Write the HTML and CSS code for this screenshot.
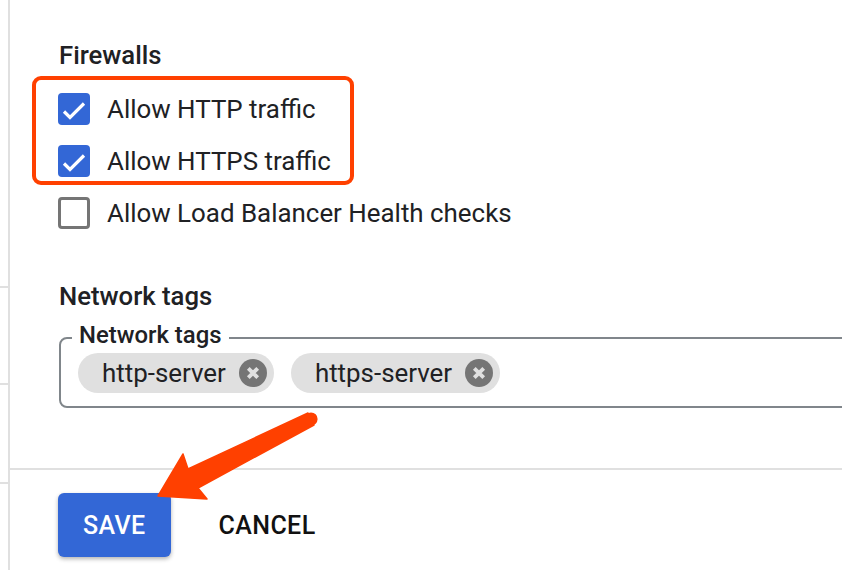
FILE: index.html
```html
<!DOCTYPE html>
<html lang="en">
<head>
    <meta charset="UTF-8">
    <meta name="viewport" content="width=device-width, initial-scale=1.0">
    <title>Firewall settings</title>
    <link rel="stylesheet" href="styles.css">
</head>
<body>
    <div class="page">
        <div class="rail">
            <div class="rail-row r1"></div>
            <div class="rail-row r2"></div>
            <div class="rail-row r3"></div>
        </div>

        <div class="panel">
            <div class="section">
                <h3 class="section-title">Firewalls</h3>

                <label class="check">
                    <span class="box checked">
                        <svg viewBox="0 0 32 32" width="32" height="32"><path d="M6 18.5 L12 24.5 L26 10.5" fill="none" stroke="#fff" stroke-width="3.2"/></svg>
                    </span>
                    Allow HTTP traffic
                </label>
                <label class="check">
                    <span class="box checked">
                        <svg viewBox="0 0 32 32" width="32" height="32"><path d="M6 18.5 L12 24.5 L26 10.5" fill="none" stroke="#fff" stroke-width="3.2"/></svg>
                    </span>
                    Allow HTTPS traffic
                </label>
                <label class="check">
                    <span class="box"></span>
                    Allow Load Balancer Health checks
                </label>

                <h3 class="section-title tags-title">Network tags</h3>

                <fieldset class="tags-field">
                    <legend>Network tags</legend>
                    <div class="chips">
                        <span class="chip">http-server
                            <span class="chip-x"><svg viewBox="0 0 28 28" width="28" height="28"><circle cx="14" cy="14" r="14" fill="#757575"/><path d="M9.3 9.3 L18.7 18.7 M18.7 9.3 L9.3 18.7" stroke="#e0e0e0" stroke-width="3.8"/></svg></span>
                        </span>
                        <span class="chip">https-server
                            <span class="chip-x"><svg viewBox="0 0 28 28" width="28" height="28"><circle cx="14" cy="14" r="14" fill="#757575"/><path d="M9.3 9.3 L18.7 18.7 M18.7 9.3 L9.3 18.7" stroke="#e0e0e0" stroke-width="3.8"/></svg></span>
                        </span>
                    </div>
                </fieldset>
            </div>

            <div class="actions">
                <button class="btn-save">Save</button>
                <button class="btn-cancel">Cancel</button>
            </div>

            <!-- annotation box around the two checked rows -->
            <div class="highlight"></div>
        </div>

        <!-- annotation arrow pointing at save -->
        <svg class="arrow" width="842" height="570" viewBox="0 0 842 570">
            <polygon points="158,496 183,454 188,469 308,413 314,425 198,488 207,499" fill="#ff4000" stroke="#ff4000" stroke-width="1.5" stroke-linejoin="round"/>
            <circle cx="311" cy="419" r="6.6" fill="#ff4000"/>
        </svg>
    </div>
</body>
</html>
```

FILE: styles.css
```css
body {
    margin: 0;
    padding: 0;
    background: #fff;
    font-family: 'Roboto', 'Liberation Sans', sans-serif;
    color: #202124;
    overflow: hidden;
}

.page {
    position: relative;
    display: flex;
    width: 842px;
    height: 570px;
    overflow: hidden;
}

/* left column edge with its row dividers */
.rail {
    width: 8px;
    flex-shrink: 0;
}

.rail-row {
    border-bottom: 2px solid #e0e0e0;
}

.r1 { height: 286px; }
.r2 { height: 95px; }
.r3 { height: 97px; }

.panel {
    position: relative;
    flex: 1;
    border-left: 2px solid #e0e0e0;
    overflow: hidden;
}

.section {
    padding: 40px 0 0 49px;
}

.section-title {
    margin: 0 0 13px 0;
    font-size: 25.7px;
    line-height: 30px;
    font-weight: 500;
}

.tags-title {
    margin-top: 42px;
    margin-bottom: 0;
}

.check {
    display: flex;
    align-items: center;
    gap: 17px;
    height: 52px;
    font-size: 25.9px;
    margin-left: -1px;
}

.box {
    width: 32px;
    height: 32px;
    box-sizing: border-box;
    border: 3px solid #757575;
    border-radius: 4px;
    flex-shrink: 0;
}

.box.checked {
    border: none;
    background: #3367d6;
}

.box svg {
    display: block;
}

.tags-field {
    margin: 12px 0 0 0;
    padding: 0 0 13px 17px;
    width: 900px;
    border: 2px solid #80868b;
    border-radius: 8px;
}

.tags-field legend {
    margin-left: -6px;
    padding: 0 7px 6px;
    font-size: 23.9px;
    line-height: 24px;
    font-weight: 500;
}

.chips {
    display: flex;
    gap: 17px;
}

.chip {
    display: flex;
    align-items: center;
    gap: 13px;
    height: 40px;
    padding: 0 7px 0 24px;
    border-radius: 20px;
    background: #e0e0e0;
    font-size: 25.9px;
}

.chip-x svg {
    display: block;
}

.actions {
    margin-top: 60px;
    border-top: 2px solid #e0e0e0;
    padding: 23px 0 0 48px;
    display: flex;
    align-items: center;
    gap: 23px;
}

.actions button {
    font-family: 'Roboto', 'Liberation Sans', sans-serif;
    font-size: 25px;
    font-weight: 500;
    letter-spacing: 0.4px;
    text-transform: uppercase;
    height: 64px;
    padding: 0 25px;
    border: none;
    border-radius: 6px;
    cursor: pointer;
}

.btn-save {
    background: #3367d6;
    color: #fff;
    box-shadow: 0 2px 4px rgba(0,0,0,0.3);
}

.btn-cancel {
    background: transparent;
    color: #111;
}

.highlight {
    position: absolute;
    left: 22px;
    top: 76px;
    width: 322px;
    height: 109px;
    box-sizing: border-box;
    border: 4px solid #ff4000;
    border-radius: 9px;
}

.arrow {
    position: absolute;
    left: 0;
    top: 0;
    pointer-events: none;
}
```
